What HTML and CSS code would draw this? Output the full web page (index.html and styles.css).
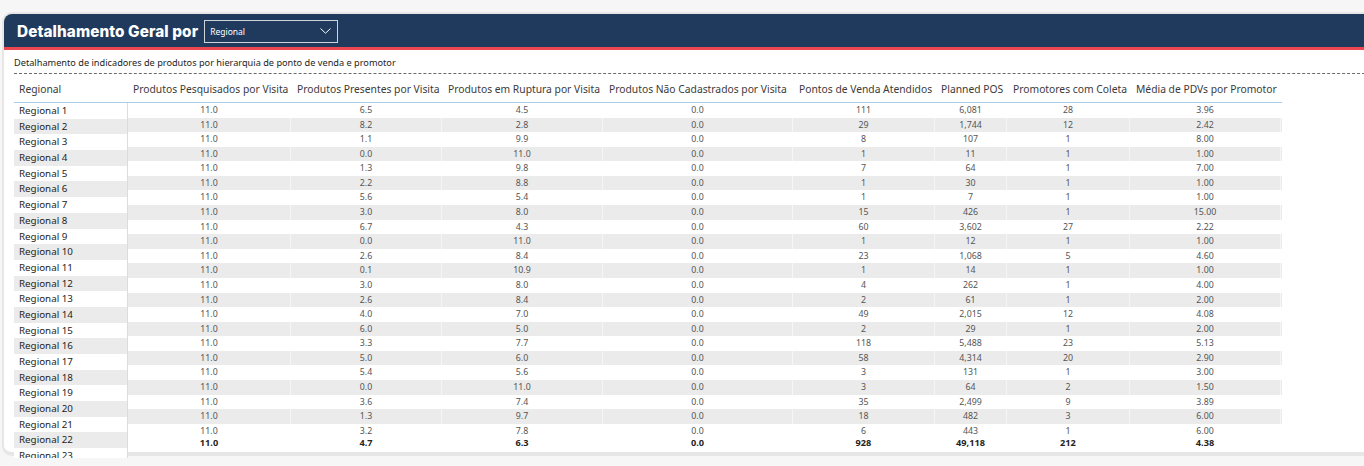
FILE: index.html
```html
<!DOCTYPE html>
<html lang="pt-BR">
<head>
<meta charset="utf-8">
<title>Detalhamento Geral</title>
<link rel="stylesheet" href="styles.css">
</head>
<body>
<div class="card">
  <div class="header">
    <div class="title">Detalhamento Geral por</div>
    <div class="select">
      <span>Regional</span>
      <svg class="chev" width="11" height="6" viewBox="0 0 11 6"><path d="M0.5 0.5 L5.5 5.2 L10.5 0.5" fill="none" stroke="#ffffff" stroke-width="1"/></svg>
    </div>
  </div>
  <div class="content">
    <div class="subtitle">Detalhamento de indicadores de produtos por hierarquia de ponto de venda e promotor</div>
    <div class="thead">
      <div class="th">Regional</div>
      <div class="th">Produtos Pesquisados por Visita</div>
      <div class="th">Produtos Presentes por Visita</div>
      <div class="th">Produtos em Ruptura por Visita</div>
      <div class="th">Produtos Não Cadastrados por Visita</div>
      <div class="th">Pontos de Venda Atendidos</div>
      <div class="th">Planned POS</div>
      <div class="th">Promotores com Coleta</div>
      <div class="th">Média de PDVs por Promotor</div>
    </div>
    <div class="tbody">
      <div class="labels">
        <div class="lbl">Regional 1</div>
        <div class="lbl">Regional 2</div>
        <div class="lbl">Regional 3</div>
        <div class="lbl">Regional 4</div>
        <div class="lbl">Regional 5</div>
        <div class="lbl">Regional 6</div>
        <div class="lbl">Regional 7</div>
        <div class="lbl">Regional 8</div>
        <div class="lbl">Regional 9</div>
        <div class="lbl">Regional 10</div>
        <div class="lbl">Regional 11</div>
        <div class="lbl">Regional 12</div>
        <div class="lbl">Regional 13</div>
        <div class="lbl">Regional 14</div>
        <div class="lbl">Regional 15</div>
        <div class="lbl">Regional 16</div>
        <div class="lbl">Regional 17</div>
        <div class="lbl">Regional 18</div>
        <div class="lbl">Regional 19</div>
        <div class="lbl">Regional 20</div>
        <div class="lbl">Regional 21</div>
        <div class="lbl">Regional 22</div>
        <div class="lbl">Regional 23</div>
      </div>
      <div class="data">
        <div class="row"><div>11.0</div><div>6.5</div><div>4.5</div><div>0.0</div><div>111</div><div>6,081</div><div>28</div><div>3.96</div></div>
        <div class="row"><div>11.0</div><div>8.2</div><div>2.8</div><div>0.0</div><div>29</div><div>1,744</div><div>12</div><div>2.42</div></div>
        <div class="row"><div>11.0</div><div>1.1</div><div>9.9</div><div>0.0</div><div>8</div><div>107</div><div>1</div><div>8.00</div></div>
        <div class="row"><div>11.0</div><div>0.0</div><div>11.0</div><div>0.0</div><div>1</div><div>11</div><div>1</div><div>1.00</div></div>
        <div class="row"><div>11.0</div><div>1.3</div><div>9.8</div><div>0.0</div><div>7</div><div>64</div><div>1</div><div>7.00</div></div>
        <div class="row"><div>11.0</div><div>2.2</div><div>8.8</div><div>0.0</div><div>1</div><div>30</div><div>1</div><div>1.00</div></div>
        <div class="row"><div>11.0</div><div>5.6</div><div>5.4</div><div>0.0</div><div>1</div><div>7</div><div>1</div><div>1.00</div></div>
        <div class="row"><div>11.0</div><div>3.0</div><div>8.0</div><div>0.0</div><div>15</div><div>426</div><div>1</div><div>15.00</div></div>
        <div class="row"><div>11.0</div><div>6.7</div><div>4.3</div><div>0.0</div><div>60</div><div>3,602</div><div>27</div><div>2.22</div></div>
        <div class="row"><div>11.0</div><div>0.0</div><div>11.0</div><div>0.0</div><div>1</div><div>12</div><div>1</div><div>1.00</div></div>
        <div class="row"><div>11.0</div><div>2.6</div><div>8.4</div><div>0.0</div><div>23</div><div>1,068</div><div>5</div><div>4.60</div></div>
        <div class="row"><div>11.0</div><div>0.1</div><div>10.9</div><div>0.0</div><div>1</div><div>14</div><div>1</div><div>1.00</div></div>
        <div class="row"><div>11.0</div><div>3.0</div><div>8.0</div><div>0.0</div><div>4</div><div>262</div><div>1</div><div>4.00</div></div>
        <div class="row"><div>11.0</div><div>2.6</div><div>8.4</div><div>0.0</div><div>2</div><div>61</div><div>1</div><div>2.00</div></div>
        <div class="row"><div>11.0</div><div>4.0</div><div>7.0</div><div>0.0</div><div>49</div><div>2,015</div><div>12</div><div>4.08</div></div>
        <div class="row"><div>11.0</div><div>6.0</div><div>5.0</div><div>0.0</div><div>2</div><div>29</div><div>1</div><div>2.00</div></div>
        <div class="row"><div>11.0</div><div>3.3</div><div>7.7</div><div>0.0</div><div>118</div><div>5,488</div><div>23</div><div>5.13</div></div>
        <div class="row"><div>11.0</div><div>5.0</div><div>6.0</div><div>0.0</div><div>58</div><div>4,314</div><div>20</div><div>2.90</div></div>
        <div class="row"><div>11.0</div><div>5.4</div><div>5.6</div><div>0.0</div><div>3</div><div>131</div><div>1</div><div>3.00</div></div>
        <div class="row"><div>11.0</div><div>0.0</div><div>11.0</div><div>0.0</div><div>3</div><div>64</div><div>2</div><div>1.50</div></div>
        <div class="row"><div>11.0</div><div>3.6</div><div>7.4</div><div>0.0</div><div>35</div><div>2,499</div><div>9</div><div>3.89</div></div>
        <div class="row"><div>11.0</div><div>1.3</div><div>9.7</div><div>0.0</div><div>18</div><div>482</div><div>3</div><div>6.00</div></div>
        <div class="row"><div>11.0</div><div>3.2</div><div>7.8</div><div>0.0</div><div>6</div><div>443</div><div>1</div><div>6.00</div></div>
        <div class="row total"><div>11.0</div><div>4.7</div><div>6.3</div><div>0.0</div><div>928</div><div>49,118</div><div>212</div><div>4.38</div></div>
      </div>
    </div>
  </div>
</div>
</body>
</html>
```
FILE: styles.css
```css
html, body {
  margin: 0;
  padding: 0;
}
body {
  width: 1364px;
  height: 466px;
  overflow: hidden;
  background: #f6f6f6;
  font-family: "Noto Sans", "Open Sans", sans-serif;
}
.card {
  margin: 12px 0 0 2px;
  width: 1420px;
  height: 444px;
  box-sizing: border-box;
  background: #ffffff;
  border: 2px solid #e6e6e6;
  border-bottom-width: 4px;
  border-radius: 10px;
}
.header {
  height: 33px;
  background: #1f3a5d;
  border-bottom: 3px solid #ec4650;
  border-radius: 8px 8px 0 0;
  display: flex;
  align-items: center;
  padding-left: 13px;
  gap: 6px;
}
.title {
  color: #ffffff;
  font-family: "Inter", "Lato", sans-serif;
  font-weight: 800;
  font-size: 15.3px;
  letter-spacing: 0.1px;
  padding-top: 1px;
}
.select {
  width: 134px;
  height: 23px;
  box-sizing: border-box;
  border: 1px solid #cfd4db;
  display: flex;
  align-items: center;
  justify-content: space-between;
  padding: 0 6px 0 5px;
  color: #ffffff;
  font-size: 8.5px;
  margin-top: 1px;
}
.chev {
  display: block;
}
.content {
  padding-left: 10px;
}
.subtitle {
  height: 24px;
  box-sizing: border-box;
  padding-top: 6px;
  font-size: 9.2px;
  color: #252423;
  border-bottom: 1px dashed #6a6a6a;
  line-height: 14px;
}
.thead {
  display: grid;
  grid-template-columns: 114px 164px 151px 161px 190px 142px 72px 123px 151px;
  width: 1268px;
  height: 29px;
  box-sizing: border-box;
  align-items: center;
  border-bottom: 1px solid #a9cbe8;
  font-size: 10.3px;
  color: #3b3a39;
  padding-top: 1px;
}
.th {
  padding-left: 5px;
  white-space: nowrap;
}
.tbody {
  display: flex;
  align-items: flex-start;
}
.labels {
  width: 114px;
  height: 355px;
  overflow: hidden;
  box-sizing: border-box;
  border-right: 1px solid #c6e3ef;
  background: #ffffff;
  position: relative;
  z-index: 2;
}
.lbl {
  height: 15.7px;
  line-height: 15.7px;
  padding-left: 5px;
  font-size: 9.8px;
  color: #252423;
  white-space: nowrap;
}
.lbl:nth-child(even) {
  background: #ebebeb;
}
.data {
  width: 1154px;
  font-size: 8.8px;
  color: #555555;
}
.row {
  display: grid;
  grid-template-columns: 163px 151px 161px 190px 142px 72px 123px 151px;
  height: 14.58px;
  line-height: 14.58px;
}
.row > div {
  text-align: center;
  border-right: 1px solid rgba(255,255,255,0.55);
}
.row:nth-child(even) {
  background: #ebebeb;
}
.row.total {
  background: none;
  height: 12px;
  line-height: 10px;
  font-weight: 700;
  font-size: 9.2px;
  color: #252423;
}
```
